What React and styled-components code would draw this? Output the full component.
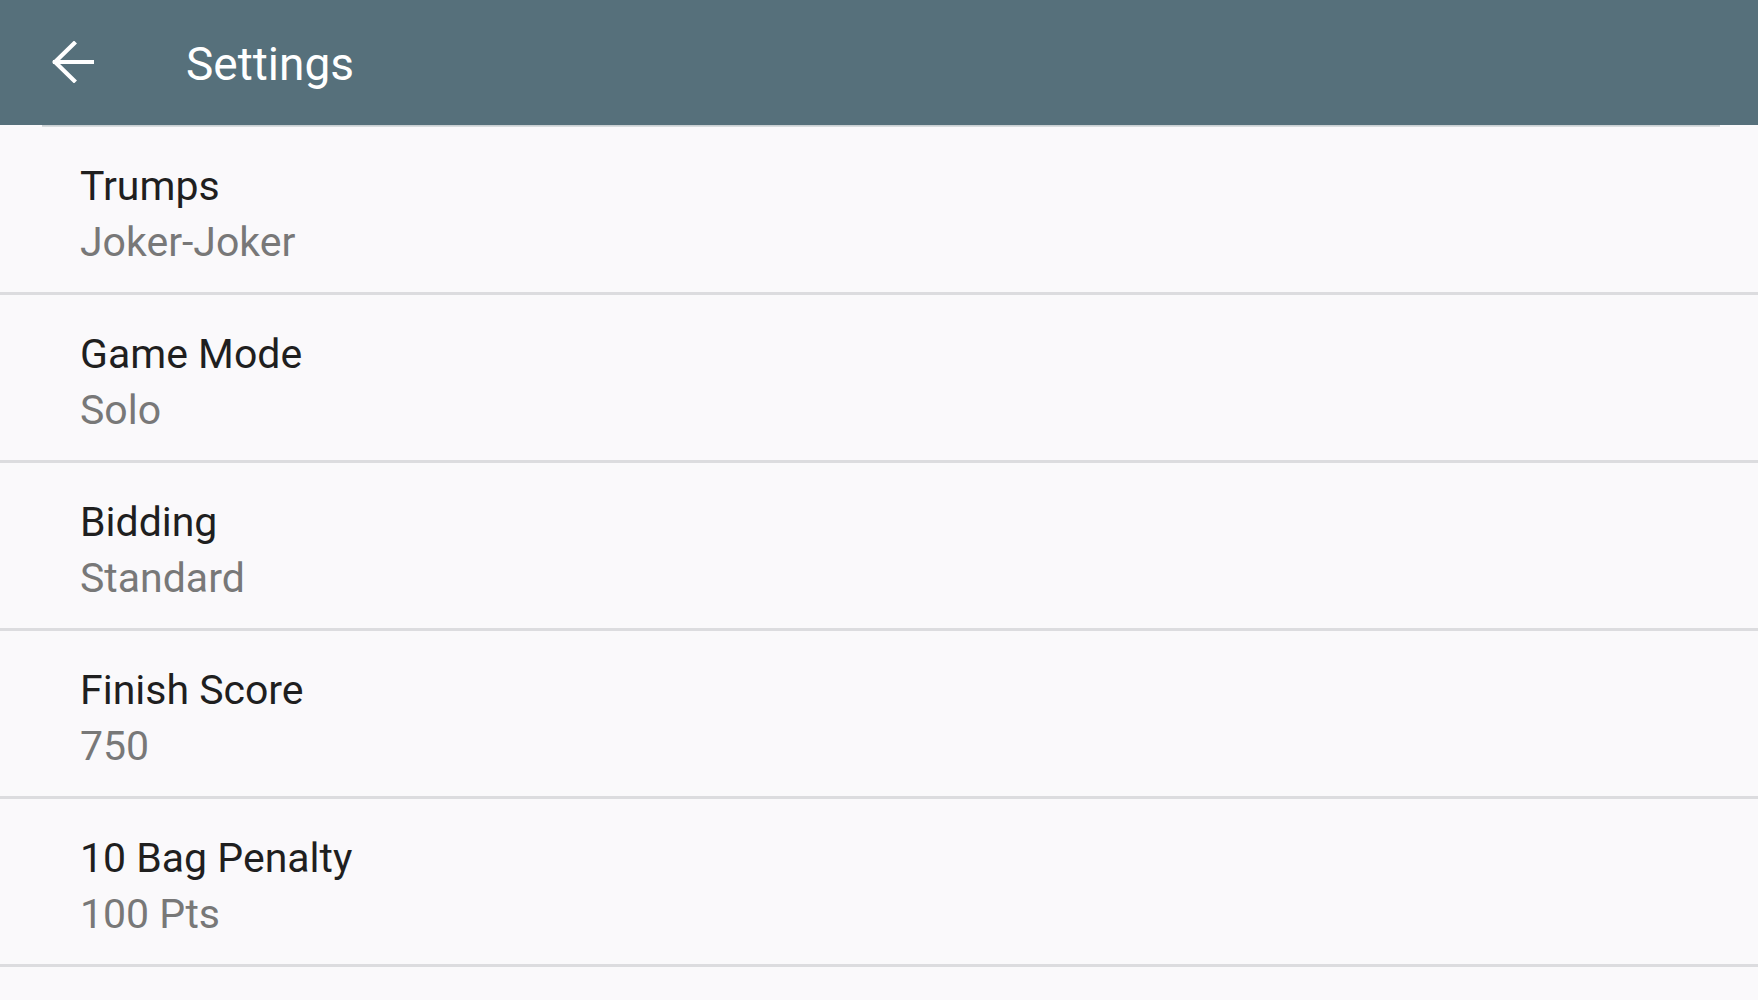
import React from 'react';
import styled, { createGlobalStyle } from 'styled-components';

const Global = createGlobalStyle`
    html, body {
        margin: 0;
        padding: 0;
        background: #faf9fb;
        font-family: Roboto, "Noto Sans", "Liberation Sans", sans-serif;
    }
`

const Toolbar = styled.header`
    height: 125px;
    background: #56707b;
    display: flex;
    align-items: center;
    padding-left: 52px;
    box-sizing: border-box;
`

const BackButton = styled.button`
    width: 42px;
    height: 42px;
    padding: 0;
    border: 0;
    background: none;
    display: flex;
    margin-top: -2px;
    cursor: pointer;
`

const Title = styled.h1`
    margin: 0 0 0 92px;
    font-size: 46px;
    font-weight: 400;
    color: #ffffff;
    line-height: 1;
    padding-top: 2px;
`

const Shadow = styled.div`
    height: 2px;
    margin: 0 38px 0 42px;
    background: linear-gradient(#c3cacd, #dfe3e5);
`

const List = styled.ul`
    list-style: none;
    margin: 0;
    padding: 0;
`

const Row = styled.li`
    padding: 31px 80px 22px;
    border-bottom: 3px solid #dcdcdf;
    display: flex;
    flex-direction: column;
`

const Label = styled.span`
    font-size: 41px;
    line-height: 56px;
    color: ${p => (p.$muted ? '#787878' : '#1f1f1f')};
`

const Arrow = () => (
    <svg width="42" height="42" viewBox="0 0 42 42" fill="none">
        <path d="M41 21H3M22 2.5L3 21l19 18.5" stroke="#fff" strokeWidth="4.2" strokeLinecap="square" />
    </svg>
)

const settings = [
    ['Trumps', 'Joker-Joker'],
    ['Game Mode', 'Solo'],
    ['Bidding', 'Standard'],
    ['Finish Score', '750'],
    ['10 Bag Penalty', '100 Pts'],
];

const App = () => {
    return (
        <>
            <Global />
            <Toolbar>
                <BackButton aria-label="Back">
                    <Arrow />
                </BackButton>
                <Title>Settings</Title>
            </Toolbar>
            <Shadow />
            <List>
                {settings.map(([name, value]) => (
                    <Row key={name}>
                        <Label>{name}</Label>
                        <Label $muted>{value}</Label>
                    </Row>
                ))}
            </List>
        </>
    );
};

export default App;
